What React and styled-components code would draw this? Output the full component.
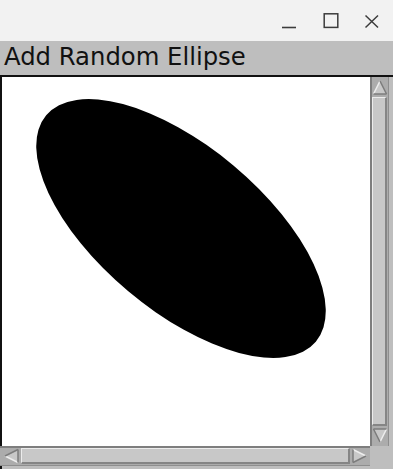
import React from "react";
import styled, { createGlobalStyle } from "styled-components";

const Global = createGlobalStyle`
  html, body { margin: 0; padding: 0; background: #bebebe; }
  body { width: 393px; height: 469px; overflow: hidden; font-family: "DejaVu Sans", sans-serif; }
`;

const Window = styled.div`
  width: 393px;
  height: 469px;
  display: flex;
  flex-direction: column;
  background: #bebebe;
`;

const TitleBar = styled.div`
  height: 41px;
  flex: none;
  background: #f2f2f2;
  display: flex;
  justify-content: flex-end;
  align-items: center;
`;

const WinButton = styled.div`
  width: 41.5px;
  height: 41px;
  display: flex;
  align-items: center;
  justify-content: center;
  padding-top: 1px;
  box-sizing: border-box;
`;

const ButtonBar = styled.div`
  height: 34px;
  flex: none;
  background: #bebebe;
  box-sizing: border-box;
  padding: 2px 0 0 4px;
  font-family: "DejaVu Sans", sans-serif;
  font-size: 24.3px;
  line-height: 28px;
  color: #111;
  white-space: nowrap;
`;

const Main = styled.div`
  flex: 1;
  display: grid;
  grid-template-columns: 368px 19px 4px;
  grid-template-rows: 369px 20px 1fr;
  border-top: 2px solid #111;
  border-left: 2px solid #111;
  background: #bebebe;
`;

const Canvas = styled.div`
  background: #fff;
  overflow: hidden;
`;

const VScroll = styled.div`
  display: flex;
  flex-direction: column;
  box-sizing: border-box;
  background: #acacac;
  border-left: 2px solid #7e7e7e;
  border-right: 1px solid #8e8e8e;
  padding: 2px 1px 2px 0;
`;

const HScroll = styled.div`
  display: flex;
  flex-direction: row;
  box-sizing: border-box;
  background: #acacac;
  border-top: 2px solid #7e7e7e;
  border-bottom: 1px solid #8e8e8e;
  padding: 0 2px 1px 3px;
  margin-left: -2px;
`;

const Thumb = styled.div`
  flex: 1;
  background: #c8c8c8;
  border-top: 1px solid #ececec;
  border-left: 1px solid #ececec;
  border-right: 2px solid #858585;
  border-bottom: 2px solid #858585;
  margin: ${(p) => (p.$vertical ? "1px 0" : "0 1px")};
`;

const ArrowBox = styled.svg`
  flex: none;
  display: block;
  width: ${(p) => (p.$vertical ? "16px" : "17px")};
  height: ${(p) => (p.$vertical ? "17px" : "16px")};
`;

const Corner = styled.div`
  background: #bebebe;
`;

function Arrow({ dir }) {
  const vertical = dir === "up" || dir === "down";
  const rot = { up: 0, down: 180, left: -90, right: 90 }[dir];
  return (
    <ArrowBox $vertical={vertical} viewBox="0 0 16 16">
      <g transform={`rotate(${rot} 8 8)`}>
        <polygon points="8,1.5 14.5,14.5 1.5,14.5" fill="#c8c8c8" />
        <line x1="8" y1="1.5" x2="1.5" y2="14.5" stroke="#ededed" strokeWidth="1.5" />
        <line x1="8" y1="1.5" x2="14.5" y2="14.5" stroke="#7c7c7c" strokeWidth="1.5" />
        <line x1="1.5" y1="14.5" x2="14.5" y2="14.5" stroke="#7c7c7c" strokeWidth="1.5" />
      </g>
    </ArrowBox>
  );
}

export default function App() {
  return (
    <>
      <Global />
      <Window>
        <TitleBar>
          <WinButton>
            <svg width="16" height="16" viewBox="0 0 16 16">
              <line x1="1" y1="14.5" x2="15" y2="14.5" stroke="#3c3c3c" strokeWidth="1.6" />
            </svg>
          </WinButton>
          <WinButton>
            <svg width="16" height="16" viewBox="0 0 16 16">
              <rect x="1.2" y="0.8" width="13.6" height="13.6" fill="none" stroke="#3c3c3c" strokeWidth="1.5" />
            </svg>
          </WinButton>
          <WinButton>
            <svg width="16" height="16" viewBox="0 0 16 16">
              <path d="M1.5 2.5 L14 14.5 M14 2.5 L1.5 14.5" fill="none" stroke="#3c3c3c" strokeWidth="1.5" />
            </svg>
          </WinButton>
        </TitleBar>
        <ButtonBar>Add Random Ellipse</ButtonBar>
        <Main>
          <Canvas>
            <svg width="368" height="369" viewBox="0 0 368 369">
              <ellipse cx="179" cy="151.5" rx="176" ry="82" transform="rotate(40 179 151.5)" fill="#000" />
            </svg>
          </Canvas>
          <VScroll>
            <Arrow dir="up" />
            <Thumb $vertical />
            <Arrow dir="down" />
          </VScroll>
          <Corner />
          <HScroll>
            <Arrow dir="left" />
            <Thumb />
            <Arrow dir="right" />
          </HScroll>
          <Corner />
          <Corner />
          <Corner />
          <Corner />
          <Corner />
        </Main>
      </Window>
    </>
  );
}
